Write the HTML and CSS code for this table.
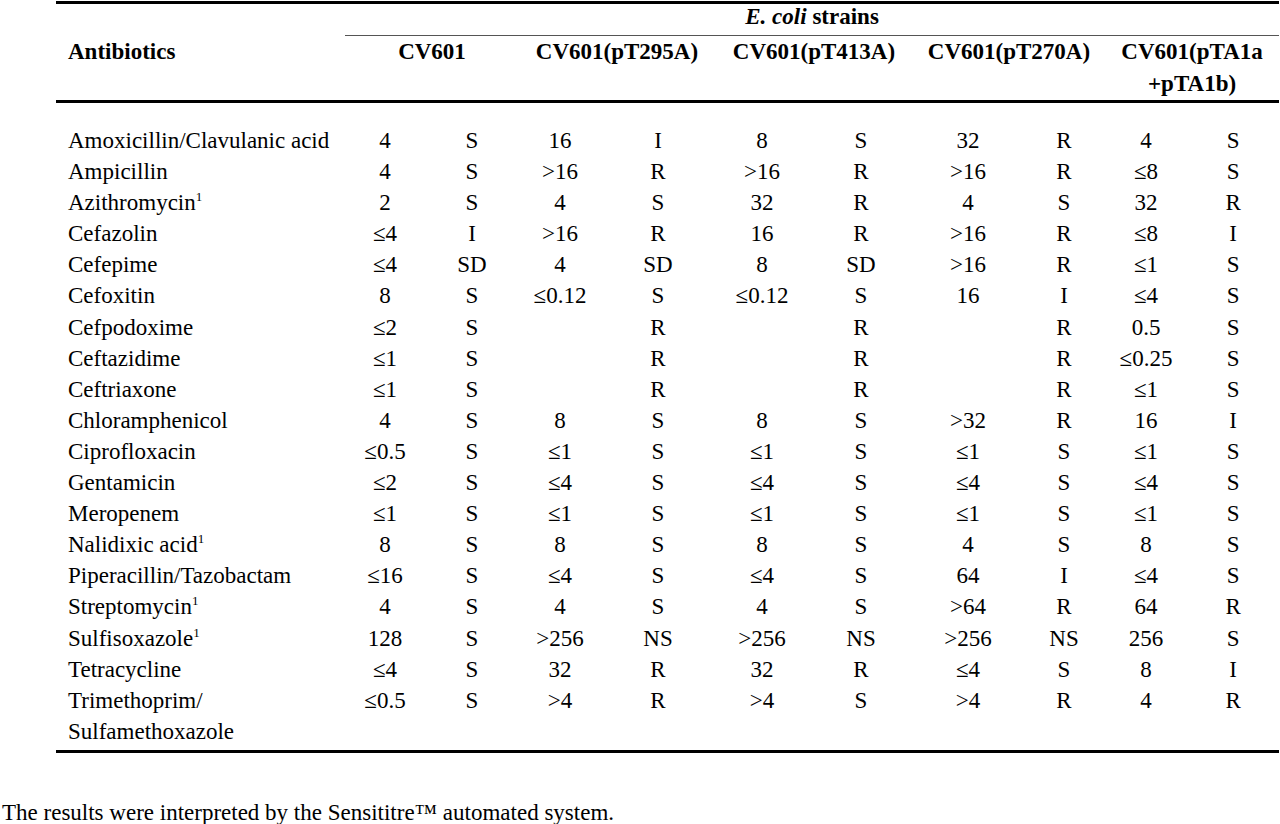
FILE: index.html
```html
<!DOCTYPE html>
<html lang="en">
<head>
  <meta charset="UTF-8">
  <meta name="viewport" content="width=device-width, initial-scale=1.0">
  <title>Antimicrobial susceptibility of E. coli strains</title>
  <link rel="stylesheet" href="styles.css">
</head>
<body>
  <table class="results">
    <colgroup>
      <col><col><col><col><col><col><col><col><col><col><col>
    </colgroup>
    <thead>
      <tr class="group-row">
        <th></th>
        <th colspan="10" class="group-title"><em>E. coli</em> strains</th>
      </tr>
      <tr class="strain-row">
        <th class="name">Antibiotics</th>
        <th colspan="2">CV601</th>
        <th colspan="2">CV601(pT295A)</th>
        <th colspan="2">CV601(pT413A)</th>
        <th colspan="2">CV601(pT270A)</th>
        <th colspan="2">CV601(pTA1a<br>+pTA1b)</th>
      </tr>
    </thead>
    <tbody>
      <tr><td class="name">Amoxicillin/Clavulanic acid</td><td>4</td><td>S</td><td>16</td><td>I</td><td>8</td><td>S</td><td>32</td><td>R</td><td>4</td><td>S</td></tr>
      <tr><td class="name">Ampicillin</td><td>4</td><td>S</td><td>&gt;16</td><td>R</td><td>&gt;16</td><td>R</td><td>&gt;16</td><td>R</td><td>≤8</td><td>S</td></tr>
      <tr><td class="name">Azithromycin<sup>1</sup></td><td>2</td><td>S</td><td>4</td><td>S</td><td>32</td><td>R</td><td>4</td><td>S</td><td>32</td><td>R</td></tr>
      <tr><td class="name">Cefazolin</td><td>≤4</td><td>I</td><td>&gt;16</td><td>R</td><td>16</td><td>R</td><td>&gt;16</td><td>R</td><td>≤8</td><td>I</td></tr>
      <tr><td class="name">Cefepime</td><td>≤4</td><td>SD</td><td>4</td><td>SD</td><td>8</td><td>SD</td><td>&gt;16</td><td>R</td><td>≤1</td><td>S</td></tr>
      <tr><td class="name">Cefoxitin</td><td>8</td><td>S</td><td>≤0.12</td><td>S</td><td>≤0.12</td><td>S</td><td>16</td><td>I</td><td>≤4</td><td>S</td></tr>
      <tr><td class="name">Cefpodoxime</td><td>≤2</td><td>S</td><td></td><td>R</td><td></td><td>R</td><td></td><td>R</td><td>0.5</td><td>S</td></tr>
      <tr><td class="name">Ceftazidime</td><td>≤1</td><td>S</td><td></td><td>R</td><td></td><td>R</td><td></td><td>R</td><td>≤0.25</td><td>S</td></tr>
      <tr><td class="name">Ceftriaxone</td><td>≤1</td><td>S</td><td></td><td>R</td><td></td><td>R</td><td></td><td>R</td><td>≤1</td><td>S</td></tr>
      <tr><td class="name">Chloramphenicol</td><td>4</td><td>S</td><td>8</td><td>S</td><td>8</td><td>S</td><td>&gt;32</td><td>R</td><td>16</td><td>I</td></tr>
      <tr><td class="name">Ciprofloxacin</td><td>≤0.5</td><td>S</td><td>≤1</td><td>S</td><td>≤1</td><td>S</td><td>≤1</td><td>S</td><td>≤1</td><td>S</td></tr>
      <tr><td class="name">Gentamicin</td><td>≤2</td><td>S</td><td>≤4</td><td>S</td><td>≤4</td><td>S</td><td>≤4</td><td>S</td><td>≤4</td><td>S</td></tr>
      <tr><td class="name">Meropenem</td><td>≤1</td><td>S</td><td>≤1</td><td>S</td><td>≤1</td><td>S</td><td>≤1</td><td>S</td><td>≤1</td><td>S</td></tr>
      <tr><td class="name">Nalidixic acid<sup>1</sup></td><td>8</td><td>S</td><td>8</td><td>S</td><td>8</td><td>S</td><td>4</td><td>S</td><td>8</td><td>S</td></tr>
      <tr><td class="name">Piperacillin/Tazobactam</td><td>≤16</td><td>S</td><td>≤4</td><td>S</td><td>≤4</td><td>S</td><td>64</td><td>I</td><td>≤4</td><td>S</td></tr>
      <tr><td class="name">Streptomycin<sup>1</sup></td><td>4</td><td>S</td><td>4</td><td>S</td><td>4</td><td>S</td><td>&gt;64</td><td>R</td><td>64</td><td>R</td></tr>
      <tr><td class="name">Sulfisoxazole<sup>1</sup></td><td>128</td><td>S</td><td>&gt;256</td><td>NS</td><td>&gt;256</td><td>NS</td><td>&gt;256</td><td>NS</td><td>256</td><td>S</td></tr>
      <tr><td class="name">Tetracycline</td><td>≤4</td><td>S</td><td>32</td><td>R</td><td>32</td><td>R</td><td>≤4</td><td>S</td><td>8</td><td>I</td></tr>
      <tr><td class="name">Trimethoprim/<br>Sulfamethoxazole</td><td>≤0.5</td><td>S</td><td>&gt;4</td><td>R</td><td>&gt;4</td><td>S</td><td>&gt;4</td><td>R</td><td>4</td><td>R</td></tr>
    </tbody>
  </table>

  <p class="note">The results were interpreted by the Sensititre™ automated system.</p>
</body>
</html>
```

FILE: styles.css
```css
* {
  margin: 0;
  padding: 0;
}

body {
  font-family: "Liberation Serif", "Times New Roman", serif;
  font-size: 23px;
  color: #000;
  background: #fff;
}

.results {
  margin: 1px 0 0 56px;
  width: 1223px;
  table-layout: fixed;
  border-collapse: separate;
  border-spacing: 0;
}

/* column widths: name, then MIC / interpretation pairs */
.results col:nth-child(1) { width: 289px; }
.results col:nth-child(2) { width: 80px; }
.results col:nth-child(3) { width: 94px; }
.results col:nth-child(4) { width: 82px; }
.results col:nth-child(5) { width: 114px; }
.results col:nth-child(6) { width: 94px; }
.results col:nth-child(7) { width: 104px; }
.results col:nth-child(8) { width: 110px; }
.results col:nth-child(9) { width: 82px; }
.results col:nth-child(10) { width: 82px; }
.results col:nth-child(11) { width: 92px; }

.results th,
.results td {
  text-align: center;
  vertical-align: top;
  font-weight: normal;
}

.results th {
  font-weight: bold;
}

.results .name {
  text-align: left;
  padding-left: 12px;
}

.group-row th {
  border-top: 3px solid #000;
  line-height: 26px;
  padding-bottom: 5px;
}

.group-title {
  border-bottom: 1px solid #555;
}

.strain-row th {
  line-height: 32px;
  border-bottom: 3px solid #000;
}

.results td {
  line-height: 31.1px;
}

.results tbody tr:first-child td {
  padding-top: 22px;
}

.results tbody tr:last-child td {
  padding-bottom: 3px;
  border-bottom: 3px solid #000;
}

sup {
  font-size: 13px;
  line-height: 0;
  vertical-align: 9px;
}

.note {
  margin: 44px 0 0 2px;
  line-height: 31px;
}
```
